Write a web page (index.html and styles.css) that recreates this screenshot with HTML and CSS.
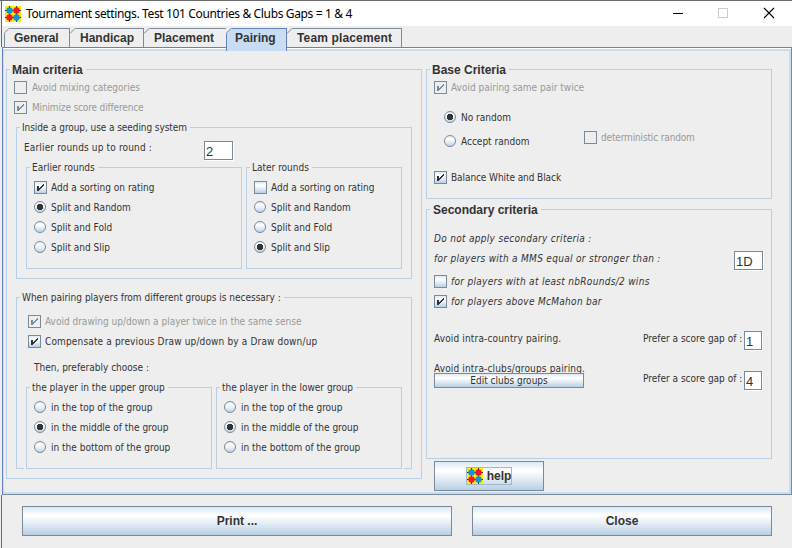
FILE: index.html
```
<!DOCTYPE html>
<html lang="en">
<head>
<meta charset="utf-8">
<title>Tournament settings</title>
<link rel="stylesheet" href="styles.css">
</head>
<body>
<svg width="0" height="0" class="defs">
  <defs>
    <linearGradient id="metal" x1="0" y1="0" x2="0" y2="1">
      <stop offset="0" stop-color="#dde8f3"/><stop offset=".3" stop-color="#ffffff"/><stop offset=".5" stop-color="#eef3f9"/><stop offset="1" stop-color="#b8cfe5"/>
    </linearGradient>
    <symbol id="radio" viewBox="0 0 13 13">
      <circle cx="6" cy="6" r="5.5" fill="url(#metal)" stroke="#7a8a99"/>
    </symbol>
    <symbol id="radio-on" viewBox="0 0 13 13">
      <circle cx="6" cy="6" r="5.5" fill="url(#metal)" stroke="#7a8a99"/>
      <path d="M4 3h4v1h1v4h-1v1h-4v-1h-1v-4h1z" fill="#333"/>
    </symbol>
    <symbol id="check" viewBox="0 0 13 13">
      <path d="M3 5h2v5h-2zM9 3h1v2h-1zM8 4h1v2h-1zM7 5h1v2h-1zM6 6h1v2h-1zM5 7h1v2h-1z" fill="currentColor" shape-rendering="crispEdges"/>
    </symbol>
    <symbol id="logo" viewBox="0 0 16 16">
      <rect width="16" height="16" fill="#ffee00"/>
      <path d="M4.500 0v16M11.500 0v16M0 4.500h16M0 11.500h16" stroke="#333" stroke-width="1"/>
      <circle cx="4.500" cy="4.500" r="3.200" fill="#0a96e0"/><circle cx="11.500" cy="4.500" r="3.200" fill="#ee1c24"/>
      <circle cx="4.500" cy="11.500" r="3.200" fill="#ee1c24"/><circle cx="11.500" cy="11.500" r="3.200" fill="#0a96e0"/>
    </symbol>
    <symbol id="corner" viewBox="0 0 6 6">
      <path d="M0 0h6L0 6z" fill="#eee"/><path d="M0 5.500L5.500 0" stroke="currentColor" fill="none"/>
    </symbol>
  </defs>
</svg>
<div class="window">
  <header class="titlebar">
    <svg class="logo"><use href="#logo"/></svg>
    <span class="title">Tournament settings. Test 101 Countries &amp; Clubs Gaps = 1 &amp; 4</span>
    <svg class="controls" width="104" height="12" viewBox="0 0 104 12">
      <path d="M0 6.500h10" stroke="#000"/>
      <rect x="45.500" y="1.500" width="9" height="9" fill="none" stroke="#ccc"/>
      <path d="M91 1l10 10M101 1l-10 10" stroke="#000" stroke-width="1.100"/>
    </svg>
  </header>
  <nav class="tabs">
    <div class="tab general"><svg class="corner"><use href="#corner"/></svg>General</div>
    <div class="tab handicap"><svg class="corner"><use href="#corner"/></svg>Handicap</div>
    <div class="tab placement"><svg class="corner"><use href="#corner"/></svg>Placement</div>
    <div class="tab pairing selected"><svg class="corner"><use href="#corner"/></svg>Pairing</div>
    <div class="tab team"><svg class="corner"><use href="#corner"/></svg>Team placement</div>
  </nav>
  <main class="page">
    <section class="group main">
      <h2 class="legend big">Main criteria</h2>
      <div class="row off"><i class="box"></i><span>Avoid mixing categories</span></div>
      <div class="row off tight"><i class="box"><svg><use href="#check"/></svg></i><span>Minimize score difference</span></div>
      <section class="group seeding">
        <h3 class="legend snug">Inside a group, use a seeding system</h3>
        <div class="uptoround"><span class="wide">Earlier rounds up to round :</span><div class="field">2</div></div>
        <div class="pair rounds">
          <section class="group">
            <h3 class="legend">Earlier rounds</h3>
            <div class="row"><i class="box"><svg><use href="#check"/></svg></i><span>Add a sorting on rating</span></div>
            <div class="row"><svg class="radio"><use href="#radio-on"/></svg><span>Split and Random</span></div>
            <div class="row"><svg class="radio"><use href="#radio"/></svg><span>Split and Fold</span></div>
            <div class="row"><svg class="radio"><use href="#radio"/></svg><span>Split and Slip</span></div>
          </section>
          <section class="group">
            <h3 class="legend">Later rounds</h3>
            <div class="row"><i class="box"></i><span>Add a sorting on rating</span></div>
            <div class="row"><svg class="radio"><use href="#radio"/></svg><span>Split and Random</span></div>
            <div class="row"><svg class="radio"><use href="#radio"/></svg><span>Split and Fold</span></div>
            <div class="row"><svg class="radio"><use href="#radio-on"/></svg><span>Split and Slip</span></div>
          </section>
        </div>
      </section>
      <section class="group drawing">
        <h3 class="legend">When pairing players from different groups is necessary :</h3>
        <div class="row off"><i class="box"><svg><use href="#check"/></svg></i><span>Avoid drawing up/down a player twice in the same sense</span></div>
        <div class="row wide"><i class="box"><svg><use href="#check"/></svg></i><span>Compensate a previous Draw up/down by a Draw down/up</span></div>
        <p class="then">Then, preferably choose :</p>
        <div class="pair choose">
          <section class="group">
            <h3 class="legend">the player in the upper group</h3>
            <div class="row"><svg class="radio"><use href="#radio"/></svg><span>in the top of the group</span></div>
            <div class="row"><svg class="radio"><use href="#radio-on"/></svg><span>in the middle of the group</span></div>
            <div class="row"><svg class="radio"><use href="#radio"/></svg><span>in the bottom of the group</span></div>
          </section>
          <section class="group">
            <h3 class="legend">the player in the lower group</h3>
            <div class="row"><svg class="radio"><use href="#radio"/></svg><span>in the top of the group</span></div>
            <div class="row"><svg class="radio"><use href="#radio-on"/></svg><span>in the middle of the group</span></div>
            <div class="row"><svg class="radio"><use href="#radio"/></svg><span>in the bottom of the group</span></div>
          </section>
        </div>
      </section>
    </section>
    <div class="side">
      <section class="group base">
        <h2 class="legend big">Base Criteria</h2>
        <div class="row off"><i class="box"><svg><use href="#check"/></svg></i><span>Avoid pairing same pair twice</span></div>
        <div class="random">
          <div class="modes">
            <div class="row"><svg class="radio"><use href="#radio-on"/></svg><span>No random</span></div>
            <div class="row"><svg class="radio"><use href="#radio"/></svg><span>Accept random</span></div>
          </div>
          <div class="row off tight"><i class="box"></i><span>deterministic random</span></div>
        </div>
        <div class="row"><i class="box"><svg><use href="#check"/></svg></i><span class="snug">Balance White and Black</span></div>
      </section>
      <section class="group secondary">
        <h2 class="legend big">Secondary criteria</h2>
        <p class="lead italic">Do not apply secondary criteria :</p>
        <div class="split mms"><span class="italic">for players with a MMS equal or stronger than :</span><div class="field">1D</div></div>
        <div class="row italic"><i class="box"></i><span>for players with at least nbRounds/2 wins</span></div>
        <div class="row italic"><i class="box"><svg><use href="#check"/></svg></i><span>for players above McMahon bar</span></div>
        <div class="split country"><span class="wide">Avoid intra-country pairing.</span><span class="prefer">Prefer a score gap of :</span><div class="field small">1</div></div>
        <div class="split clubs">
          <div class="edit"><span class="wide">Avoid intra-clubs/groups pairing.</span><button class="button mini">Edit clubs groups</button></div>
          <span class="prefer">Prefer a score gap of :</span><div class="field small">4</div>
        </div>
      </section>
      <button class="button help"><span class="focus"><svg class="logo"><use href="#logo"/></svg>help</span></button>
    </div>
  </main>
  <footer class="actions">
    <button class="button print">Print ...</button>
    <button class="button close">Close</button>
  </footer>
</div>
</body>
</html>
```
FILE: styles.css
```
* { box-sizing: border-box; }
body { margin: 0; width: 792px; height: 548px; overflow: hidden; background: #eee; color: #333; font: 10px/22px "DejaVu Sans Condensed", "DejaVu Sans", sans-serif; }
h2, h3, p { margin: 0; font-size: inherit; font-weight: normal; }
.defs { display: block; width: 0; height: 0; }
.window { height: 548px; padding-left: 1px; border-top: 1px solid #6b6b6b; display: flex; flex-direction: column; }
.titlebar { height: 25px; flex: none; background: #fff; border-left: 1px solid #6b6b6b; display: flex; align-items: center; padding: 0 15px 0 3px; color: #000; }
.logo { width: 16px; height: 16px; flex: none; }
.title { margin-left: 5px; font: 12px/20px "Noto Sans", sans-serif; letter-spacing: -.36px; white-space: nowrap; }
.controls { margin: -1px 0 0 auto; }

.tabs { height: 21px; flex: none; padding: 2px 0 0 2px; border-left: 1px solid #6b6b6b; display: flex; font: bold 12px/19px "Liberation Sans", sans-serif; }
.tab { position: relative; height: 19px; border-top: 1px solid #7a8a99; border-right: 1px solid #7a8a99; padding-left: 10px; color: #333; white-space: nowrap; }
.corner { position: absolute; left: 0; top: -1px; width: 6px; height: 6px; color: #7a8a99; }
.general { width: 66px; }
.general::before { content: ""; position: absolute; left: 0; top: 4px; bottom: 0; width: 1px; background: #7a8a99; }
.general .corner { z-index: 1; }
.handicap { width: 74px; }
.placement { width: 82px; border-right: 0; }
.pairing { width: 61px; padding-left: 8px; }
.team { width: 115px; letter-spacing: .14px; }
.selected { height: 23px; background: #c8ddf2; border: 1px solid #6382bf; border-bottom: 0; z-index: 1; }
.selected .corner { left: -1px; color: #6382bf; }

.page { height: 448px; flex: none; margin-left: 1px; border: 1px solid #6382bf; border-right-color: #7a8a99; border-bottom-color: #7a8a99; box-shadow: inset 0 1px #fff, inset 0 3px #c8ddf2, inset 1px 0 #c8ddf2, inset -2px -2px #c8ddf2; padding: 21px 0 0 3px; display: flex; }
.group { border: 1px solid #b8cfe5; }
.legend { display: block; width: fit-content; height: 15px; line-height: 15px; margin: -8px 0 0 3px; padding: 0 3px 0 2px; background: #eee; white-space: nowrap; }
.big { font: bold 12px/17px "Liberation Sans", sans-serif; }
.row { display: flex; height: 20px; padding-left: 7px; white-space: nowrap; }
.row > span { margin-left: 4px; }
.off { color: #999; }
.box { flex: none; width: 13px; height: 13px; margin-top: 4px; border: 1px solid #7a8a99; background: linear-gradient(#dde8f3, #fff 30%, #eef3f9 50%, #b8cfe5); color: #333; }
.box svg { display: block; width: 13px; height: 13px; margin: -1px; }
.off .box { background: #eee; color: #7a8a99; }
.radio { flex: none; width: 13px; height: 13px; margin-top: 4px; }
.tight { letter-spacing: -.15px; }
.snug { letter-spacing: -.08px; }
.wide { letter-spacing: .15px; }
.italic { font-style: italic; letter-spacing: .3px; white-space: nowrap; }
.field { flex: none; width: 29px; height: 19px; border: 1px solid #7a8a99; background: #fff; box-shadow: 1px 1px #fff; font: 13px/19px "Liberation Sans", sans-serif; padding-left: 1px; }
.small { width: 18px; }

.main { width: 416px; height: 410px; }
.main > .row > span { margin-left: 5px; }
.seeding { width: 396px; height: 152px; margin: 10px 0 0 9px; }
.uptoround { display: flex; height: 26px; padding: 2px 0 0 7px; }
.uptoround span { width: 180px; }
.uptoround .field { margin-top: 4px; }
.pair { display: flex; gap: 4px; }
.pair .legend { margin-bottom: 2px; }
.rounds { margin: 6px 0 0 9px; height: 102px; }
.rounds .group:first-child { width: 216px; }
.rounds .group:last-child { width: 156px; }
.drawing { width: 396px; height: 172px; margin: 18px 0 0 9px; }
.drawing > .legend { margin-bottom: 6px; }
.drawing > .row { padding-left: 11px; }
.then { height: 20px; margin: 6px 0 0 17px; }
.choose { margin: 10px 7px 0; padding: 0 2px; height: 82px; background: #eee; }
.choose .group { width: 186px; }

.side { margin-left: 4px; width: 346px; }
.base { height: 130px; }
.random { display: flex; margin-top: 10px; padding-left: 10px; height: 60px; }
.modes { width: 140px; display: flex; flex-direction: column; gap: 4px; }
.random > .row { margin-top: 20px; }
.secondary { margin-top: 10px; height: 250px; }
.secondary > .legend { padding-left: 3px; }
.lead { height: 20px; margin: 11px 0 0 7px; }
.split { display: flex; padding-left: 7px; white-space: nowrap; }
.split .field { margin-top: 3px; }
.mms { height: 23px; }
.mms > span { width: 300px; }
.country { margin-top: 17px; height: 30px; }
.country > .wide { width: 209px; }
.prefer { width: 101px; }
.edit { width: 209px; height: 30px; display: flex; flex-direction: column; }
.edit > span { height: 15px; }
.clubs .prefer { margin-top: 10px; }
.clubs .field { margin-top: 13px; }
.button { display: block; border: 1px solid #7a8a99; background: linear-gradient(#dde8f3, #fff 30%, #eef3f9 50%, #b8cfe5); color: #333; font: bold 12px/15px "Liberation Sans", sans-serif; padding: 0; }
.mini { width: 150px; height: 15px; font: 10px/13px "DejaVu Sans Condensed", sans-serif; }
.help { width: 110px; height: 30px; margin: 2px 0 0 8px; display: flex; align-items: center; justify-content: center; }
.focus { display: flex; align-items: center; gap: 4px; height: 18px; border: 1px solid #a3b8cc; line-height: 18px; }
.actions { display: flex; gap: 20px; border-left: 1px solid #6b6b6b; flex: 1; padding: 11px 0 0 20px; }
.actions .button { height: 30px; padding-top: 1px; }
.print { width: 430px; }
.close { width: 300px; }
```
